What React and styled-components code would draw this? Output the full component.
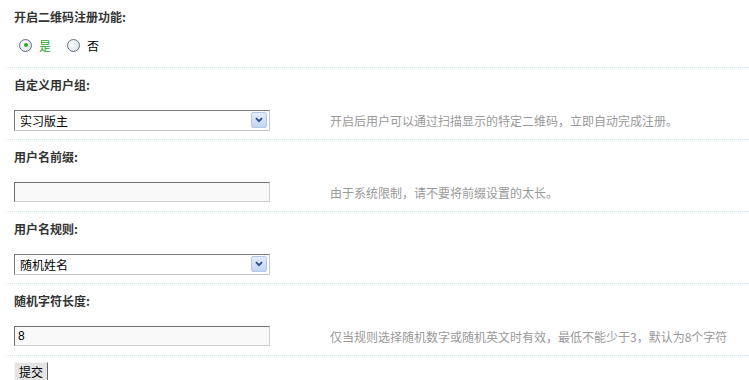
import styled, { createGlobalStyle } from "styled-components";

const GlobalStyle = createGlobalStyle`
  body {
    margin: 0;
    background: #fff;
    font: 12px "Noto Sans CJK SC", "Liberation Sans", sans-serif;
    color: #333;
  }
`;

const Form = styled.div`
  width: 749px;
`;

const Section = styled.div`
  border-bottom: 1px dotted #cfe2ee;
  margin-left: 6px;
`;

const Title = styled.div`
  height: 33px;
  line-height: 33px;
  padding-left: 8px;
  font-weight: bold;
  color: #333;
`;

const Content = styled.div`
  height: ${p => (p.$short ? "34px" : "38px")};
  display: grid;
  grid-template-columns: 316px 1fr;
  align-items: ${p => (p.$short ? "start" : "center")};
  padding-left: 8px;
  padding-top: ${p => (p.$short ? "5px" : "0")};
  box-sizing: border-box;
`;

const Tip = styled.div`
  color: #999;
  white-space: nowrap;
`;

const RadioGroup = styled.div`
  display: flex;
  align-items: center;
  padding-left: 5px;
  height: 14px;
`;

const RadioLabel = styled.label`
  display: flex;
  align-items: center;
  gap: 7px;
  margin-right: 16px;
  color: ${p => (p.$checked ? "#1fa51f" : "#000")};
`;

const RadioDot = styled.span`
  width: 11px;
  height: 11px;
  border-radius: 50%;
  border: 1px solid #5d7387;
  background: radial-gradient(circle at 40% 35%, #fff 0%, #e6eaee 60%, #cdd4da 100%);
  display: flex;
  align-items: center;
  justify-content: center;
  &::after {
    content: "";
    width: 4px;
    height: 4px;
    border-radius: 50%;
    background: ${p => (p.$checked ? "#2fa52f" : "transparent")};
  }
`;

const SelectBox = styled.div`
  width: 256px;
  height: 21px;
  box-sizing: border-box;
  border: 1px solid;
  border-color: #7c7c7c #c8c8c8 #c8c8c8 #7c7c7c;
  background: #fff;
  display: flex;
  align-items: center;
  justify-content: space-between;
  padding: 0 2px 0 5px;
  color: #000;
`;

const Arrow = styled.span`
  width: 16px;
  height: 16px;
  box-sizing: border-box;
  border: 1px solid #b5c8ea;
  border-radius: 2px;
  background: linear-gradient(#e3ecfb, #c3d4f3);
  display: flex;
  align-items: center;
  justify-content: center;
`;

const TextInput = styled.div`
  width: 256px;
  height: 20px;
  box-sizing: border-box;
  border: 1px solid;
  border-color: #6f6f6f #cccccc #cccccc #6f6f6f;
  background: #f9f9f9;
  padding-left: 3px;
  line-height: 18px;
  color: #000;
  font-family: "Liberation Sans", sans-serif;
`;

const Footer = styled.div`
  padding: 6px 0 0 14px;
`;

const Button = styled.button`
  height: 19px;
  padding: 0 4px;
  line-height: 17px;
  font: 12px/17px "Noto Sans CJK SC", sans-serif;
  color: #000;
  background: #e4e4e4;
  border: 1px solid;
  border-color: #f4f4f4 #666 #666 #f4f4f4;
`;

const Select = ({ value }) => (
  <SelectBox>
    <span>{value}</span>
    <Arrow>
      <svg width="8" height="6" viewBox="0 0 8 6">
        <path d="M1 1.2 L4 4.2 L7 1.2" fill="none" stroke="#2a4c8c" strokeWidth="1.8" />
      </svg>
    </Arrow>
  </SelectBox>
);

const App = () => (
  <Form>
    <GlobalStyle />
    <Section>
      <Title>开启二维码注册功能:</Title>
      <Content $short>
        <RadioGroup>
          <RadioLabel $checked>
            <RadioDot $checked />是
          </RadioLabel>
          <RadioLabel>
            <RadioDot />否
          </RadioLabel>
        </RadioGroup>
      </Content>
    </Section>
    <Section>
      <Title>自定义用户组:</Title>
      <Content>
        <Select value="实习版主" />
        <Tip>开启后用户可以通过扫描显示的特定二维码，立即自动完成注册。</Tip>
      </Content>
    </Section>
    <Section>
      <Title>用户名前缀:</Title>
      <Content>
        <TextInput />
        <Tip>由于系统限制，请不要将前缀设置的太长。</Tip>
      </Content>
    </Section>
    <Section>
      <Title>用户名规则:</Title>
      <Content>
        <Select value="随机姓名" />
        <Tip />
      </Content>
    </Section>
    <Section>
      <Title>随机字符长度:</Title>
      <Content>
        <TextInput>8</TextInput>
        <Tip>仅当规则选择随机数字或随机英文时有效，最低不能少于3，默认为8个字符</Tip>
      </Content>
    </Section>
    <Footer>
      <Button>提交</Button>
    </Footer>
  </Form>
);

export default App;
